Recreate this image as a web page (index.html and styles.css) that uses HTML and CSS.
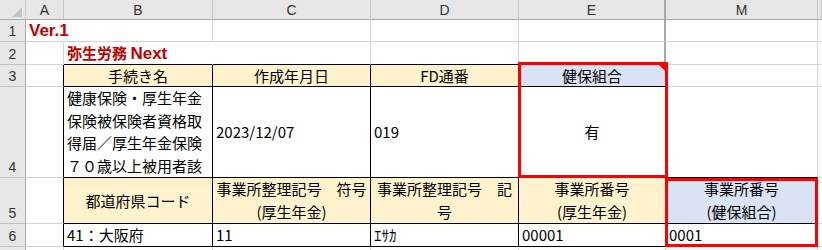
FILE: index.html
```html
<!DOCTYPE html>
<html lang="ja">
<head>
    <meta charset="utf-8">
    <title>弥生労務 Next</title>
    <link rel="stylesheet" href="styles.css">
</head>
<body>
    <table class="sheet">
        <colgroup>
            <col class="c-rh"><col class="c-a"><col class="c-b"><col class="c-c"><col class="c-d"><col class="c-e"><col class="c-m"><col class="c-n">
        </colgroup>
        <thead>
            <tr class="r-head">
                <th class="corner"><span class="select-all"></span></th>
                <th>A</th>
                <th>B</th>
                <th>C</th>
                <th>D</th>
                <th class="hid">E</th>
                <th>M</th>
                <th class="last"></th>
            </tr>
        </thead>
        <tbody>
            <tr class="r1">
                <th class="rh">1</th>
                <td class="ver lat flow">Ver.1</td>
                <td></td><td></td><td></td><td class="hid"></td><td></td><td class="last"></td>
            </tr>
            <tr class="r2">
                <th class="rh">2</th>
                <td></td>
                <td class="ver flow bt">弥生労務 <span class="lat">Next</span></td>
                <td class="bt"></td><td class="bt"></td><td class="bt hid"></td><td></td><td class="last"></td>
            </tr>
            <tr class="r3">
                <th class="rh">3</th>
                <td class="br"></td>
                <td class="box hd">手続き名</td>
                <td class="box hd">作成年月日</td>
                <td class="box hd">FD通番</td>
                <td class="box hd blue sel-top note">健保組合</td>
                <td></td><td class="last"></td>
            </tr>
            <tr class="r4">
                <th class="rh">4</th>
                <td class="br"></td>
                <td class="box long">健康保険・厚生年金保険被保険者資格取得届／厚生年金保険７０歳以上被用者該</td>
                <td class="box">2023/12/07</td>
                <td class="box">019</td>
                <td class="box mid sel-bot">有</td>
                <td class="bt"></td><td class="last"></td>
            </tr>
            <tr class="r5">
                <th class="rh">5</th>
                <td class="br"></td>
                <td class="box hd">都道府県コード</td>
                <td class="box hd multi">事業所整理記号　符号<br>(厚生年金)</td>
                <td class="box hd multi">事業所整理記号　記号</td>
                <td class="box hd multi">事業所番号<br>(厚生年金)</td>
                <td class="box hd multi blue sel-top sel-m">事業所番号<br>(健保組合)</td>
                <td class="last"></td>
            </tr>
            <tr class="r6">
                <th class="rh">6</th>
                <td class="br"></td>
                <td class="box">41：大阪府</td>
                <td class="box">11</td>
                <td class="box">ｴｻｶ</td>
                <td class="box">00001</td>
                <td class="box sel-bot sel-m">0001</td>
                <td class="last"></td>
            </tr>
            <tr class="r7">
                <th class="rh"></th>
                <td></td><td></td><td></td><td></td><td></td><td></td><td class="last"></td>
            </tr>
        </tbody>
    </table>
</body>
</html>
```

FILE: styles.css
```css
body {
    margin: 0;
    background: #fff;
    overflow: hidden;
}
.sheet {
    table-layout: fixed;
    border-collapse: separate;
    border-spacing: 0;
    width: 822px;
    font-family: "Noto Sans CJK JP", sans-serif;
    font-size: 15px;
    line-height: 20px;
    color: #000;
}
.c-rh { width: 26px; }
.c-a { width: 38px; }
.c-b { width: 149px; }
.c-c { width: 158px; }
.c-d { width: 148px; }
.c-e { width: 147px; }
.c-m { width: 152px; }
.c-n { width: 4px; }

.r-head { height: 20px; }
.r1 { height: 22px; }
.r2 { height: 23px; }
.r3 { height: 22px; }
.r4 { height: 91px; }
.r5 { height: 46px; }
.r6 { height: 23px; }
.r7 { height: 22px; }

/* column letters + row numbers */
.r-head th {
    padding: 0;
    background: #e6e6e6;
    border-right: 1px solid #c8c8c8;
    border-bottom: 1px solid #ababab;
    font: normal 14px/18px "Liberation Sans", sans-serif;
    color: #333;
    text-align: center;
}
.r-head th.hid {
    border-right: 2px solid #a8a8a8;
}
.corner {
    vertical-align: bottom;
}
.r-head .corner {
    padding: 0 3px 2px 0;
}
.select-all {
    display: block;
    width: 0;
    height: 0;
    margin-left: auto;
    border-left: 10px solid transparent;
    border-bottom: 10px solid #c4c4c4;
}
.rh {
    padding: 0 0 1px;
    background: #e6e6e6;
    border-right: 1px solid #ababab;
    border-bottom: 1px solid #c0c0c0;
    font: normal 14px/18px "Liberation Sans", sans-serif;
    color: #333;
    text-align: center;
    vertical-align: bottom;
}

/* cells */
.sheet td {
    padding: 0 3px;
    border-right: 1px solid #d4d4d4;
    border-bottom: 1px solid #d4d4d4;
    white-space: nowrap;
}
.sheet td.last {
    border-right: 0;
}
.sheet td.hid {
    border-right: 2px solid #a8a8a8;
}
.sheet td.flow {
    border-right-color: transparent;
}
.sheet td.bt {
    border-bottom-color: #000;
}
.sheet td.br {
    border-right-color: #000;
}
.sheet td.box {
    border-right-color: #000;
    border-bottom-color: #000;
}
.ver {
    color: #c00000;
    font-weight: bold;
    vertical-align: bottom;
}
.lat {
    font-family: "Liberation Sans", sans-serif;
    font-size: 17px;
}
.hd {
    background: #fff2cc;
    text-align: center;
}
.hd.blue {
    background: #dae3f3;
}
.mid {
    text-align: center;
}
.multi {
    white-space: normal !important;
    line-height: 22.5px;
}
.long {
    white-space: normal !important;
    vertical-align: top;
    line-height: 22.5px;
}

/* red frames drawn over the grid */
.sel-top, .sel-bot {
    position: relative;
}
.sel-top::after, .sel-bot::after {
    content: "";
    position: absolute;
    left: -1px;
    right: -3px;
    border: 3px solid #ff0000;
}
.sel-top::after {
    top: -3px;
    bottom: -1px;
    border-bottom: 0;
}
.sel-bot::after {
    top: 0;
    bottom: -1px;
    border-top: 0;
}
.sel-m.sel-top::after {
    top: 0;
}
.sel-m::after {
    right: -1px;
}
.note::before {
    content: "";
    position: absolute;
    top: 0;
    right: 0;
    border-top: 6px solid #ff0000;
    border-left: 6px solid transparent;
}
```
